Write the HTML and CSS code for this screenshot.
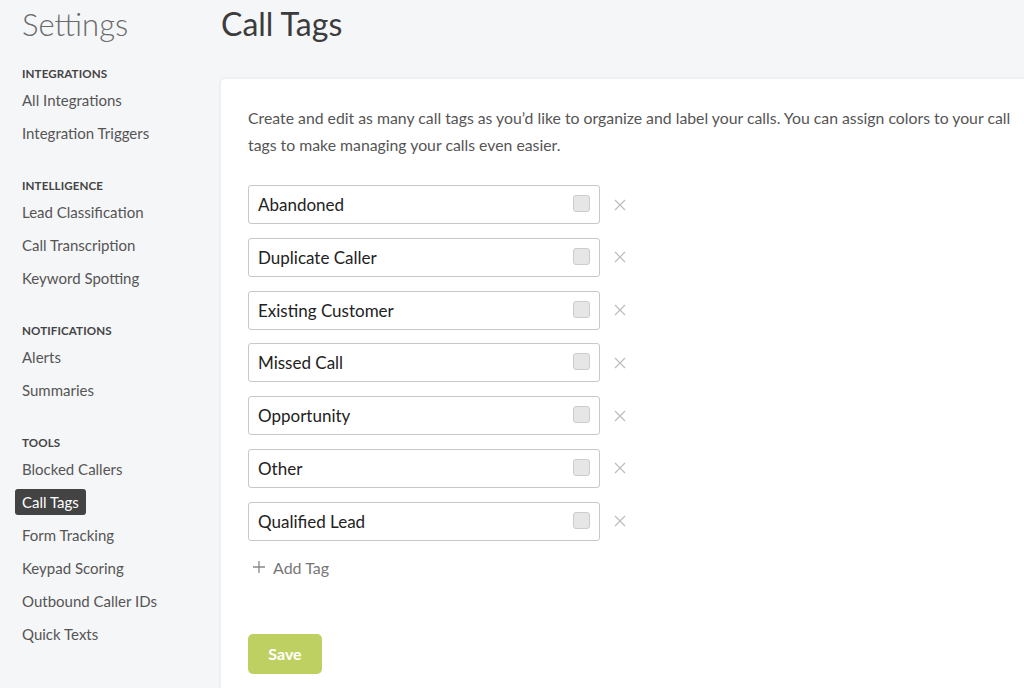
FILE: index.html
```html
<!DOCTYPE html>
<html>
<head>
<meta charset="utf-8">
<link rel="stylesheet" href="styles.css">
</head>
<body>
<div class="page">
  <aside class="sidebar">
    <h1 class="side-title">Settings</h1>
    <div class="group">
      <div class="group-head">INTEGRATIONS</div>
      <a class="item">All Integrations</a>
      <a class="item">Integration Triggers</a>
    </div>
    <div class="group">
      <div class="group-head">INTELLIGENCE</div>
      <a class="item">Lead Classification</a>
      <a class="item">Call Transcription</a>
      <a class="item">Keyword Spotting</a>
    </div>
    <div class="group">
      <div class="group-head">NOTIFICATIONS</div>
      <a class="item">Alerts</a>
      <a class="item">Summaries</a>
    </div>
    <div class="group">
      <div class="group-head">TOOLS</div>
      <a class="item">Blocked Callers</a>
      <a class="item active">Call Tags</a>
      <a class="item">Form Tracking</a>
      <a class="item">Keypad Scoring</a>
      <a class="item">Outbound Caller IDs</a>
      <a class="item">Quick Texts</a>
    </div>
  </aside>
  <main class="main">
    <h2 class="page-title">Call Tags</h2>
    <section class="card">
      <p class="intro">Create and edit as many call tags as you’d like to organize and label your calls. You can assign colors to your call tags to make managing your calls even easier.</p>
      <div class="tags">
        <div class="tag-row"><div class="tag-input"><span class="tag-name">Abandoned</span><span class="swatch"></span></div><svg class="remove" viewBox="0 0 12 12"><path d="M1 1L11 11M11 1L1 11"/></svg></div>
        <div class="tag-row"><div class="tag-input"><span class="tag-name">Duplicate Caller</span><span class="swatch"></span></div><svg class="remove" viewBox="0 0 12 12"><path d="M1 1L11 11M11 1L1 11"/></svg></div>
        <div class="tag-row"><div class="tag-input"><span class="tag-name">Existing Customer</span><span class="swatch"></span></div><svg class="remove" viewBox="0 0 12 12"><path d="M1 1L11 11M11 1L1 11"/></svg></div>
        <div class="tag-row"><div class="tag-input"><span class="tag-name">Missed Call</span><span class="swatch"></span></div><svg class="remove" viewBox="0 0 12 12"><path d="M1 1L11 11M11 1L1 11"/></svg></div>
        <div class="tag-row"><div class="tag-input"><span class="tag-name">Opportunity</span><span class="swatch"></span></div><svg class="remove" viewBox="0 0 12 12"><path d="M1 1L11 11M11 1L1 11"/></svg></div>
        <div class="tag-row"><div class="tag-input"><span class="tag-name">Other</span><span class="swatch"></span></div><svg class="remove" viewBox="0 0 12 12"><path d="M1 1L11 11M11 1L1 11"/></svg></div>
        <div class="tag-row"><div class="tag-input"><span class="tag-name">Qualified Lead</span><span class="swatch"></span></div><svg class="remove" viewBox="0 0 12 12"><path d="M1 1L11 11M11 1L1 11"/></svg></div>
      </div>
      <div class="add-tag"><svg class="plus" viewBox="0 0 12 12"><path d="M6 0V12M0 6H12"/></svg><span>Add Tag</span></div>
      <button class="save">Save</button>
    </section>
  </main>
</div>
</body>
</html>
```
FILE: styles.css
```css
* { box-sizing: border-box; }
html, body { margin: 0; padding: 0; }
body {
  background: #f5f6f8;
  font-family: Lato, "Open Sans", sans-serif;
  color: #555;
  width: 1024px;
  height: 688px;
  overflow: hidden;
}
.page { display: flex; }
.sidebar {
  width: 220px;
  flex: none;
  padding: 4px 0 0 22px;
}
.side-title {
  margin: 0 0 22px 0;
  font-size: 31px;
  font-weight: 300;
  color: #6a6a6a;
  line-height: 40px;
}
.group { display: flex; flex-direction: column; align-items: flex-start; margin-bottom: 25px; }
.group-head {
  font-size: 11.6px;
  font-weight: 700;
  color: #444;
  letter-spacing: 0.1px;
  line-height: 16px;
  margin-bottom: 5px;
}
.item {
  font-size: 15px;
  color: #555;
  line-height: 20px;
  padding: 3px 0;
  margin-bottom: 7px;
}
.item.active {
  background: #434343;
  color: #fff;
  border-radius: 3px;
  padding: 3px 7px;
  margin-left: -7px;
}
.main { flex: 1; min-width: 0; }
.page-title {
  margin: 0;
  padding: 4px 0 0 1px;
  font-size: 32px;
  font-weight: 400;
  color: #3c3c3c;
  line-height: 40px;
  height: 78px;
}
.card {
  background: #fff;
  border-top-left-radius: 5px;
  box-shadow: 0 0 2px rgba(0,0,0,0.08);
  border: 1px solid #eceef1;
  border-right: none;
  padding: 25px 0 40px 27px;
  height: 620px;
}
.intro {
  margin: 0 0 27px 0;
  font-size: 15.8px;
  line-height: 27px;
  color: #555;
  max-width: 780px;
}
.tags { display: flex; flex-direction: column; gap: 13.8px; }
.tag-row { display: flex; align-items: center; }
.tag-input {
  width: 352px;
  height: 39px;
  border: 1px solid #c8c8c8;
  border-radius: 3px;
  display: flex;
  align-items: center;
  justify-content: space-between;
  padding: 0 9px 0 9px;
}
.tag-name { font-size: 17px; color: #222; }
.swatch {
  width: 17px;
  height: 17px;
  margin-top: -2px;
  background: #e6e6e6;
  border: 1px solid #ccc;
  border-radius: 3px;
}
.remove {
  margin-left: 14px;
  width: 12px;
  height: 12px;
  stroke: #bdbdbd;
  stroke-width: 1.2;
  fill: none;
}
.add-tag {
  display: flex;
  align-items: center;
  gap: 8px;
  margin: 17px 0 0 5px;
  color: #777;
  font-size: 16px;
}
.plus {
  width: 12px;
  height: 12px;
  stroke: #888;
  stroke-width: 1.3;
  fill: none;
}
.save {
  margin-top: 57px;
  width: 74px;
  height: 40px;
  background: #bfd063;
  border: none;
  border-radius: 5px;
  color: #fff;
  font-family: Lato, sans-serif;
  font-weight: 700;
  font-size: 16px;
}
```
